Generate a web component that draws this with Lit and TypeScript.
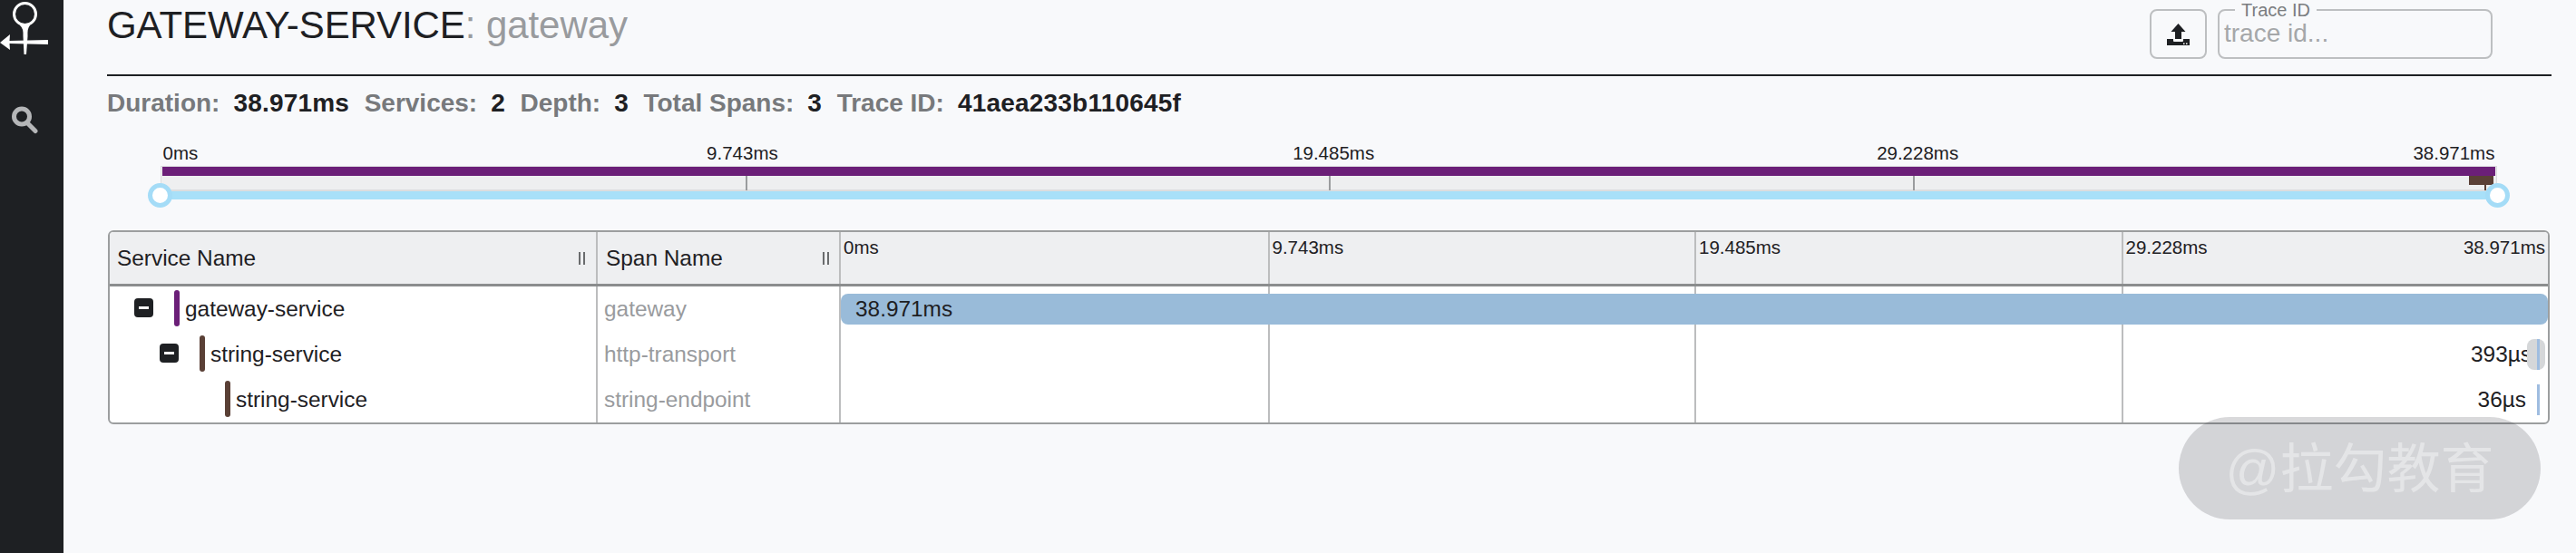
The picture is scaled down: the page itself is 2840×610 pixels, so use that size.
import { LitElement, html, css, svg } from "lit";
import { customElement } from "lit/decorators.js";

const TICKS = ["0ms", "9.743ms", "19.485ms", "29.228ms", "38.971ms"];
// where each minimap label is anchored along the track, in percent
const LABEL_POS = [0.1, 24.9, 50.2, 75.2, 99.9];

interface SpanRow {
  service: string;
  span: string;
  color: string;
  depth: number;
  collapsible: boolean;
  duration: string;
}

const ROWS: SpanRow[] = [
  { service: "gateway-service", span: "gateway", color: "#6b1f78", depth: 0, collapsible: true, duration: "38.971ms" },
  { service: "string-service", span: "http-transport", color: "#5a4036", depth: 1, collapsible: true, duration: "393µs" },
  { service: "string-service", span: "string-endpoint", color: "#5a4036", depth: 2, collapsible: false, duration: "36µs" },
];

const STATS = [
  ["Duration:", "38.971ms"],
  ["Services:", "2"],
  ["Depth:", "3"],
  ["Total Spans:", "3"],
  ["Trace ID:", "41aea233b110645f"],
];

@customElement("app-root")
export class AppRoot extends LitElement {
  static styles = css`
    :host {
      display: block;
      position: relative;
      height: 610px;
      overflow: hidden;
      background: #f8f9fb;
      color: #1e2023;
      font-family: "Liberation Sans", Arial, sans-serif;
    }

    .page {
      display: flex;
      height: 610px;
    }

    .sidebar {
      flex: none;
      width: 70px;
      background: #1e2023;
      display: flex;
      flex-direction: column;
    }

    .logo {
      display: block;
      width: 70px;
      height: 64px;
    }

    .search {
      display: block;
      width: 30px;
      height: 32px;
      margin: 52px 0 0 12px;
    }

    .main {
      flex: 1;
      min-width: 0;
      padding: 0 27px 0 48px;
    }

    .header {
      height: 82px;
      border-bottom: 2px solid #1e2023;
      display: flex;
      justify-content: space-between;
    }

    .title {
      font-size: 42px;
      line-height: 56px;
      letter-spacing: -0.08px;
    }

    .title span {
      color: #999b9e;
    }

    .search-box {
      display: flex;
      gap: 12px;
      padding: 10px 65px 0 0;
    }

    .upload {
      box-sizing: border-box;
      width: 63px;
      height: 55px;
      border: 2px solid #bdbfc1;
      border-radius: 8px;
      display: flex;
      align-items: center;
      justify-content: center;
    }

    .upload svg {
      display: block;
      width: 25px;
      height: 24px;
    }

    .trace-input {
      box-sizing: border-box;
      width: 303px;
      height: 55px;
      border: 2px solid #bdbfc1;
      border-radius: 8px;
      position: relative;
      padding: 3px 0 0 5px;
      font-size: 28px;
      line-height: 44px;
      color: #a5a7a9;
    }

    .legend {
      position: absolute;
      top: -12px;
      left: 17px;
      padding: 0 7px;
      background: #f8f9fb;
      font-size: 20px;
      line-height: 23px;
      color: #7b7d80;
    }

    .stats {
      display: flex;
      gap: 16.5px;
      margin-top: 14px;
      font-size: 28px;
      line-height: 32px;
      font-weight: 700;
      color: #77797c;
    }

    .stats b {
      color: #1e2023;
      margin-left: 15px;
      letter-spacing: 0.2px;
    }

    .minimap {
      margin: 26px 60px 0 59px;
    }

    .mini-labels {
      position: relative;
      height: 27px;
      font-size: 20.5px;
      line-height: 25px;
    }

    .mini-labels span {
      position: absolute;
      top: 0;
      white-space: nowrap;
    }

    .mini-bars {
      box-sizing: border-box;
      position: relative;
      height: 28px;
      padding: 0 1px;
      background: #eeeff0;
      border: 1px solid #dcdddf;
      border-bottom-width: 2px;
    }

    .mini-root {
      height: 10px;
      background: #6b1f78;
    }

    .mini-child {
      height: 10px;
      width: 27px;
      margin-left: auto;
      margin-right: 2px;
      background: #5a4036;
    }

    .mini-leaf {
      width: 2px;
      height: 6px;
      margin-left: auto;
      margin-right: 10px;
      background: #5a4036;
    }

    .mini-tick {
      position: absolute;
      top: 10px;
      width: 2px;
      height: 16px;
      background: #9a9c9e;
    }

    .slider {
      position: relative;
      height: 9px;
      background: #a8e0f9;
    }

    .handle {
      position: absolute;
      top: -9px;
      box-sizing: border-box;
      width: 27px;
      height: 27px;
      border: 5px solid #a4dcf7;
      border-radius: 50%;
      background: #ffffff;
    }

    .handle.left {
      left: -14px;
    }

    .handle.right {
      right: -14px;
    }

    .table {
      box-sizing: border-box;
      margin: 34px 2px 0 1px;
      height: 214px;
      border: 2px solid #9c9e9f;
      border-radius: 6px;
      background: #ffffff;
      overflow: hidden;
    }

    .row {
      display: grid;
      grid-template-columns: 536px 268px 1fr;
      height: 50px;
    }

    .row.head {
      height: 57px;
      background: #eeeff1;
      border-bottom: 3px solid #8b8d8e;
    }

    .cell {
      box-sizing: border-box;
      display: flex;
      align-items: center;
      min-width: 0;
      font-size: 24.4px;
      white-space: nowrap;
    }

    .head .cell {
      justify-content: space-between;
      padding: 0 12px 0 8px;
    }

    .grip {
      width: 7px;
      height: 14px;
      border-left: 2px solid #6a6c6e;
      border-right: 2px solid #6a6c6e;
      box-sizing: border-box;
    }

    .span-cell {
      border-left: 2px solid #bcbdbe;
      color: #999b9e;
      padding-left: 7px;
    }

    .head .span-cell {
      color: #1e2023;
      padding: 0 11px 0 9px;
    }

    .service-cell {
      gap: 23px;
    }

    .toggle {
      flex: none;
      position: relative;
      width: 21px;
      height: 21px;
      margin-bottom: 4px;
      border-radius: 4px;
      background: #1e2023;
      display: flex;
      align-items: center;
      justify-content: center;
    }

    .toggle::after {
      content: "";
      width: 11px;
      height: 3px;
      background: #ffffff;
    }

    .toggle-spacer {
      flex: none;
      width: 21px;
    }

    .service {
      display: flex;
      align-items: center;
      gap: 6px;
    }

    .swatch {
      flex: none;
      width: 6px;
      height: 40px;
      margin-bottom: 2px;
      border-radius: 3px;
    }

    .time-cell {
      position: relative;
      border-left: 2px solid #bcbdbe;
    }

    .grid-lines {
      position: absolute;
      inset: 0;
      display: grid;
      grid-template-columns: repeat(4, 1fr);
    }

    .grid-lines i {
      border-left: 2px solid #bcbdbe;
    }

    .grid-lines i:first-child {
      border-left: none;
    }

    .head .time-cell {
      display: block;
      padding: 0;
    }

    .head .grid-lines span {
      font-size: 20.5px;
      line-height: 25px;
      padding: 4px 0 0 3px;
    }

    .last-tick {
      position: absolute;
      top: 4px;
      right: 3px;
      font-size: 20.5px;
      line-height: 25px;
    }

    .grid-lines .tick-cell {
      border-left: 2px solid #bcbdbe;
    }

    .grid-lines .tick-cell:first-child {
      border-left: none;
    }

    .bar-row {
      position: relative;
      height: 34px;
      width: 100%;
      display: flex;
      align-items: center;
      justify-content: flex-end;
    }

    .bar-full {
      justify-content: flex-start;
      background: #99bbd9;
      border-radius: 8px;
      padding-left: 16px;
      box-sizing: border-box;
    }

    .pill {
      flex: none;
      position: relative;
      width: 20px;
      height: 34px;
      margin: 0 3px 0 -5px;
      border-radius: 8px;
      background: #d5d7d9;
    }

    .pill::after,
    .hairline {
      content: "";
      position: absolute;
      top: 0;
      left: 11px;
      width: 3px;
      height: 34px;
      background: #9fbde0;
    }

    .hairline {
      position: static;
      flex: none;
      margin: 0 9px 0 12px;
    }

    .watermark {
      position: absolute;
      left: 2402px;
      top: 460px;
      box-sizing: border-box;
      width: 399px;
      height: 113px;
      padding-bottom: 8px;
      border-radius: 57px;
      background: rgba(30, 32, 40, 0.17);
      display: flex;
      align-items: center;
      justify-content: center;
      font-family: "Liberation Sans", "Noto Sans CJK SC", sans-serif;
      font-size: 59px;
      color: rgba(255, 255, 255, 0.4);
    }
  `;

  private logo() {
    return svg`
      <svg class="logo" viewBox="0 0 70 64" fill="#ffffff">
        <circle cx="27.5" cy="15.5" r="12" fill="none" stroke="#ffffff" stroke-width="3" />
        <path d="M22 28 Q26 31 25.5 40 L26.5 60 L29 60 L30.5 40 Q30 31 33 28 Z" />
        <path d="M0 47 L11 38 L10.5 45 L53 44 L53 49 L10.5 48 L11 55 Z" />
      </svg>
    `;
  }

  private searchIcon() {
    return svg`
      <svg class="search" viewBox="0 0 30 32" fill="none" stroke="#b5b6b8">
        <circle cx="12" cy="12.5" r="8.5" stroke-width="5" />
        <path d="M18.5 20 L27 28.5" stroke-width="5" stroke-linecap="round" />
      </svg>
    `;
  }

  private uploadIcon() {
    return svg`
      <svg viewBox="0 0 25 24" fill="#1e2023">
        <path d="M12.5 0 L20.5 9 H16 V17 H9 V9 H4.5 Z" />
        <path d="M0 17 H7 V19 Q7 20 8 20 H17 Q18 20 18 19 V17 H25 V24 H0 Z" />
        <rect x="18" y="21.5" width="1.5" height="1.5" fill="#ffffff" />
        <rect x="21" y="21.5" width="1.5" height="1.5" fill="#ffffff" />
      </svg>
    `;
  }

  private gridLines() {
    return html`<div class="grid-lines"><i></i><i></i><i></i><i></i></div>`;
  }

  private bar(row: SpanRow, index: number) {
    if (index === 0) {
      return html`<div class="bar-row bar-full">${row.duration}</div>`;
    }
    if (index === 1) {
      return html`<div class="bar-row"><span>${row.duration}</span><div class="pill"></div></div>`;
    }
    return html`<div class="bar-row"><span>${row.duration}</span><div class="hairline"></div></div>`;
  }

  render() {
    return html`
      <div class="page">
        <nav class="sidebar">${this.logo()}${this.searchIcon()}</nav>
        <main class="main">
          <header class="header">
            <div class="title">GATEWAY-SERVICE<span>: gateway</span></div>
            <div class="search-box">
              <div class="upload">${this.uploadIcon()}</div>
              <div class="trace-input"><span class="legend">Trace ID</span>trace id...</div>
            </div>
          </header>
          <div class="stats">
            ${STATS.map(([k, v]) => html`<div>${k}<b>${v}</b></div>`)}
          </div>
          <div class="minimap">
            <div class="mini-labels">
              ${TICKS.map((t, i) => {
                const shift = i === 0 ? "0" : i === 4 ? "-100%" : "-50%";
                return html`<span style="left:${LABEL_POS[i]}%;transform:translateX(${shift})">${t}</span>`;
              })}
            </div>
            <div class="mini-bars">
              <div class="mini-root"></div>
              <div class="mini-child"></div>
              <div class="mini-leaf"></div>
              ${[25, 50, 75].map((p) => html`<div class="mini-tick" style="left:${p}%"></div>`)}
            </div>
            <div class="slider">
              <div class="handle left"></div>
              <div class="handle right"></div>
            </div>
          </div>
          <section class="table">
            <div class="row head">
              <div class="cell">Service Name<div class="grip"></div></div>
              <div class="cell span-cell">Span Name<div class="grip"></div></div>
              <div class="cell time-cell">
                <div class="grid-lines">
                  ${TICKS.slice(0, 4).map((t) => html`<span class="tick-cell">${t}</span>`)}
                </div>
                <span class="last-tick">${TICKS[4]}</span>
              </div>
            </div>
            ${ROWS.map(
              (row, i) => html`
                <div class="row">
                  <div class="cell service-cell" style="padding-left:${27 + row.depth * 28}px">
                    ${row.collapsible
                      ? html`<div class="toggle"></div>`
                      : html`<div class="toggle-spacer"></div>`}
                    <div class="service">
                      <div class="swatch" style="background:${row.color}"></div>
                      ${row.service}
                    </div>
                  </div>
                  <div class="cell span-cell">${row.span}</div>
                  <div class="cell time-cell">${this.gridLines()}${this.bar(row, i)}</div>
                </div>
              `,
            )}
          </section>
        </main>
      </div>
      <div class="watermark">@拉勾教育</div>
    `;
  }
}
